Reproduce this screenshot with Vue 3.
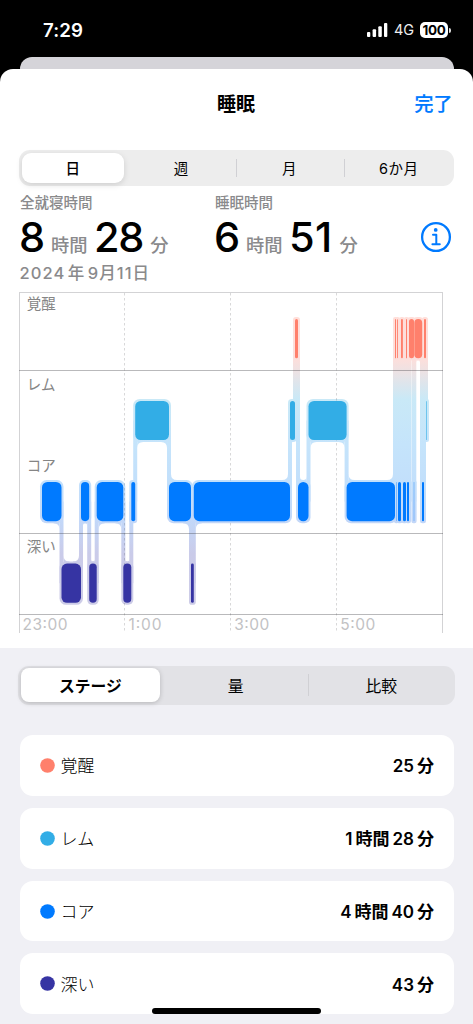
<script setup>
const ranges = ['日', '週', '月', '6か月']

const stages = [
  { name: '覚醒', color: '#ff806c', parts: ['25', '分'] },
  { name: 'レム', color: '#32ade6', parts: ['1', '時間', '28', '分'] },
  { name: 'コア', color: '#007aff', parts: ['4', '時間', '40', '分'] },
  { name: '深い', color: '#3634a3', parts: ['43', '分'] }
]

// Stage rows: top edge inside the chart and fill colour
const rows = {
  awake: { y: 27.1, color: '#ff806c' },
  rem: { y: 108.9, color: '#32ade6' },
  core: { y: 190, color: '#007aff' },
  deep: { y: 271.6, color: '#3634a3' }
}
const H = 39.2
const PAD = 2

// [stage, start x, end x, opacity]
const night = [
  ['core', 42, 61.5], ['deep', 61.5, 81], ['core', 81, 89.2], ['deep', 89.2, 96.7],
  ['core', 96.7, 123.3], ['deep', 123.3, 131.3], ['core', 131.3, 135.2], ['rem', 135.2, 169],
  ['core', 169, 191], ['deep', 191, 193.8], ['core', 193.8, 290], ['rem', 290, 295],
  ['awake', 295, 298], ['core', 298, 308.5], ['rem', 308.5, 346.6], ['core', 346.6, 395],
  ['awake', 395, 396], ['core', 396, 396.7, 0.5], ['awake', 397, 397.9], ['core', 398, 401],
  ['awake', 401, 402.9], ['core', 403, 406], ['awake', 406, 407], ['core', 407, 409],
  ['awake', 409, 414], ['core', 413.4, 414.6, 0.3], ['awake', 414.3, 422.2], ['core', 422, 424],
  ['awake', 424, 426], ['rem', 426, 427, 0.6]
]

const blocks = night.map(([stage, a, b, opacity = 1]) => ({
  x: a, y: rows[stage].y, w: b - a, color: rows[stage].color, opacity,
  r: Math.min(5.5, (b - a) / 2)
}))

const halos = blocks.map(b => ({
  x: b.x - PAD, y: b.y - PAD, w: b.w + PAD * 2, h: H + PAD * 2,
  r: Math.min(6.5, (b.w + PAD * 2) / 2.4)
}))

// Vertical links between neighbouring blocks, with rounded inner corners
const links = []
const fillets = []
for (let i = 1; i < blocks.length; i++) {
  const p = blocks[i - 1]
  const n = blocks[i]
  const x = n.x
  const down = n.y > p.y
  const upper = down ? p : n
  const lower = down ? n : p
  links.push({ x: x - PAD, y: upper.y + H / 2, w: PAD * 2, h: lower.y - upper.y })
  const ru = Math.min(6, (upper.w - PAD * 2) / 2)
  const rl = Math.min(6, (lower.w - PAD * 2) / 2)
  const side = down ? -1 : 1
  const yb = upper.y + H + PAD
  const yt = lower.y - PAD
  if (ru > 0) {
    const ex = x + side * PAD
    fillets.push(`M${ex + side * ru} ${yb}Q${ex} ${yb} ${ex} ${yb + ru}V${yb - 1}H${ex + side * ru}Z`)
  }
  if (rl > 0) {
    const ex = x - side * PAD
    fillets.push(`M${ex - side * rl} ${yt}Q${ex} ${yt} ${ex} ${yt - rl}V${yt + 1}H${ex - side * rl}Z`)
  }
}

const rowLabels = [
  { t: '覚醒', y: 16.6 }, { t: 'レム', y: 97.8 }, { t: 'コア', y: 178.8 }, { t: '深い', y: 259.8 }
]
const times = [
  { t: '23:00', x: 22.6, w: 45 }, { t: '1:00', x: 128.5, w: 33 },
  { t: '3:00', x: 234.2, w: 35 }, { t: '5:00', x: 340.2, w: 35 }
]
</script>

<template>
  <div class="phone">
    <header class="status">
      <span class="clock">7:29</span>
      <div class="indicators">
        <svg class="signal" width="21" height="14" viewBox="0 0 21 14">
          <rect x="0" y="9" width="3.3" height="5" rx="1" />
          <rect x="5.6" y="6.3" width="3.5" height="7.7" rx="1" />
          <rect x="11.3" y="3.3" width="3.5" height="10.7" rx="1" />
          <rect x="17" y="0" width="3.3" height="14" rx="1" />
        </svg>
        <span class="network">4G</span>
        <span class="battery">100</span>
        <i class="battery-tip"></i>
      </div>
    </header>
    <div class="behind"></div>
    <main class="sheet">
      <div class="nav">
        <h1>睡眠</h1>
        <a class="done">完了</a>
      </div>

      <div class="segments range">
        <div v-for="(r, i) in ranges" :key="r" class="segment" :class="{ active: i === 0, divided: i > 1 }">{{ r }}</div>
      </div>

      <section class="summary">
        <div class="metric first">
          <div class="caption">全就寝時間</div>
          <div class="value"><b>8</b><span>時間</span><b>28</b><span>分</span></div>
        </div>
        <div class="metric">
          <div class="caption">睡眠時間</div>
          <div class="value"><b>6</b><span>時間</span><b class="wide">51</b><span>分</span></div>
        </div>
        <svg class="info" width="32" height="32" viewBox="0 0 32 32">
          <circle cx="16" cy="16" r="13.9" fill="none" stroke="#007aff" stroke-width="2.3" />
          <circle cx="15.7" cy="8.9" r="1.9" fill="#007aff" />
          <path d="M13 13.7h3.3v9.3M12.4 23.2h7.4" fill="none" stroke="#007aff" stroke-width="2" stroke-linecap="round" stroke-linejoin="round" />
        </svg>
      </section>
      <div class="date">2024<i></i>年<i></i>9月11日</div>

      <svg class="chart" width="473" height="350" viewBox="0 0 473 350">
        <defs>
          <linearGradient id="halo" gradientUnits="userSpaceOnUse" x1="0" y1="25" x2="0" y2="314">
            <stop offset="0" stop-color="#ffdfda" />
            <stop offset="0.15" stop-color="#fbdfdc" />
            <stop offset="0.285" stop-color="#c9e9f7" />
            <stop offset="0.44" stop-color="#c5e4fb" />
            <stop offset="0.58" stop-color="#c2dffb" />
            <stop offset="0.7" stop-color="#c2d8f9" />
            <stop offset="0.82" stop-color="#cacbe9" />
            <stop offset="1" stop-color="#cdcce7" />
          </linearGradient>
        </defs>
        <g fill="url(#halo)">
          <rect v-for="(h, i) in halos" :key="'h' + i" :x="h.x" :y="h.y" :width="h.w" :height="h.h" :rx="h.r" />
          <rect v-for="(l, i) in links" :key="'l' + i" :x="l.x" :y="l.y" :width="l.w" :height="l.h" />
          <path v-for="(f, i) in fillets" :key="'f' + i" :d="f" />
        </g>
        <g class="grid">
          <path class="light" d="M19 .5H443M19.5 0V341M442.5 0V341" />
          <path class="rule" d="M19 78.5H443M19 241.5H443M19 322.5H443" />
          <path class="dash" d="M124.5 1V341M230.5 1V341M336.5 1V341" />
        </g>
        <rect v-for="(b, i) in blocks" :key="'b' + i" :x="b.x" :y="b.y" :width="b.w" :height="H" :rx="b.r" :fill="b.color" :opacity="b.opacity" />
        <text v-for="l in rowLabels" :key="l.t" class="row-label" x="26.8" :y="l.y">{{ l.t }}</text>
        <text v-for="t in times" :key="t.t" class="time" :x="t.x" y="337.6" :textLength="t.w">{{ t.t }}</text>
      </svg>

      <section class="details">
        <div class="segments mode">
          <div class="segment active">ステージ</div>
          <div class="segment">量</div>
          <div class="segment divided">比較</div>
        </div>
        <ul class="list">
          <li v-for="s in stages" :key="s.name">
            <svg width="15" height="15"><circle cx="7.5" cy="7.5" r="7.3" :fill="s.color" /></svg>
            <span class="name">{{ s.name }}</span>
            <span class="amount"><span v-for="(p, i) in s.parts" :key="i">{{ p }}</span></span>
          </li>
        </ul>
      </section>
    </main>
    <div class="home"></div>
  </div>
</template>

<style>
body { background: #000; }
</style>

<style scoped>
* { box-sizing: border-box; }
.phone {
  position: relative;
  width: 473px;
  height: 1024px;
  overflow: hidden;
  background: #000;
  color: #000;
  font-family: Inter, "Noto Sans CJK JP", sans-serif;
}
.status { height: 57px; padding: 20px 22px 0 43px; display: flex; justify-content: space-between; }
.clock { color: #fff; font-size: 18.7px; line-height: 21px; font-weight: 600; letter-spacing: .1px; }
.indicators { display: flex; align-items: center; height: 20px; }
.signal { fill: #fff; }
.network { color: #eee; font-size: 14.5px; font-weight: 400; margin-left: 6px; width: 21px; line-height: 20px; }
.battery {
  margin-left: 5px; width: 28px; height: 16px; border-radius: 5px; background: #fff; color: #000;
  font-size: 13.5px; line-height: 16.5px; font-weight: 700; text-align: center; letter-spacing: -.4px;
}
.battery-tip { width: 2px; height: 5px; margin-left: 1px; background: #ddd; border-radius: 0 2px 2px 0; }
.behind { height: 24px; margin: 0 19.5px -12px; border-radius: 12px 12px 0 0; background: #d5d4d9; }
.sheet { position: relative; height: 955px; background: #fff; border-radius: 13px 13px 0 0; overflow: hidden; }
.nav { height: 81px; padding: 22px 20.5px 0 19.5px; display: grid; grid-template-columns: 1fr auto 1fr; align-items: start; }
h1 { margin: 0; grid-column: 2; font-size: 19px; line-height: 28px; font-weight: 700; }
.done { color: #007aff; font-size: 19px; line-height: 28px; font-weight: 500; text-align: right; -webkit-text-stroke: .2px #007aff; }

.segments { display: grid; }
.segment { position: relative; display: flex; align-items: center; justify-content: center; }
.segment.divided::before { content: ""; position: absolute; left: 0; width: 1px; background: #d0d0d4; }
.segment.active { background: #fff; }
.range { margin: 0 19px; height: 36px; padding: 2.5px 0 3px; grid-template-columns: 108px 108.5px 108px 1fr; border-radius: 11px; background: #ededed; font-size: 14.5px; }
.range .segment { padding-bottom: 1px; letter-spacing: .5px; }
.range .active { margin: 0 3px; border-radius: 9px; font-weight: 500; box-shadow: 0 2px 6px rgba(0,0,0,.13); }
.range .divided::before { top: 6px; bottom: 6px; }

.summary { display: flex; height: 72.5px; padding: 4.5px 20px 0; }
.first { width: 195px; }
.caption { font-size: 14.5px; line-height: 24px; font-weight: 500; color: #8a8a8c; }
.value { display: flex; align-items: baseline; height: 44px; line-height: 44px; }
.value b { font-size: 41.5px; font-weight: 500; letter-spacing: -1.2px; margin-left: -1px; }
.value .wide { letter-spacing: .3px; }
.value span { font-size: 18.3px; font-weight: 500; color: #8a8a8c; margin: 0 7.5px 0 7px; }
.info { margin: 30px 1.5px 0 auto; flex: none; }
.date { padding: 2px 0 0 19.5px; font-size: 16.5px; line-height: 24px; height: 33.5px; font-weight: 500; color: #8a8a8c; letter-spacing: 1.05px; white-space: nowrap; }
.date i { display: inline-block; width: 2.5px; }

.chart { display: block; margin-top: -.5px; }
.light { stroke: #d3d3d5; }
.rule { stroke: rgba(60,60,67,.36); }
.dash { stroke: rgba(60,60,67,.2); stroke-dasharray: 2.5 2.5; }
.row-label { font-size: 14.5px; fill: #858585; }
.time { font-size: 15.5px; fill: #c2c2c4; }

.details { margin-top: 6px; height: 376px; padding: 18px 19px 0 19.5px; background: #f0f0f5; }
.mode { height: 39px; margin: 0 -.5px 0 -1.5px; padding: 2.5px 0; grid-template-columns: 145.2px 145px 1fr; border-radius: 11px; background: #e2e2e6; font-size: 15.8px; }
.mode .active { margin: 0 3px 0 2.5px; border-radius: 8px; font-weight: 700; box-shadow: 0 1px 5px rgba(0,0,0,.2); }
.mode .divided::before { top: 6px; bottom: 6px; }
.list { list-style: none; margin: 30.3px 0 0; padding: 0; display: grid; gap: 12px; }
li { height: 60.9px; border-radius: 13px; background: #fff; display: flex; align-items: center; padding: 0 20px; }
.name { margin: -1px 0 0 6px; font-size: 17px; font-weight: 300; }
.amount { margin: -1px 0 0 auto; display: flex; align-items: baseline; gap: 3px; font-size: 17px; font-weight: 600; }
.home { position: absolute; left: 152px; top: 1008px; width: 169px; height: 5.5px; border-radius: 3px; background: #000; }
</style>
